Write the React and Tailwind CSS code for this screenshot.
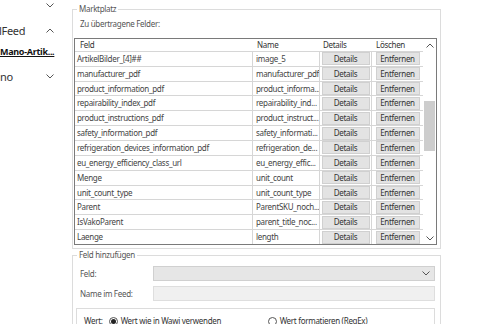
import React from "react";

const rows = [
  ["ArtikelBilder_[4]##", "image_5"],
  ["manufacturer_pdf", "manufacturer_pdf"],
  ["product_information_pdf", "product_informa..."],
  ["repairability_index_pdf", "repairability_ind..."],
  ["product_instructions_pdf", "product_instruct..."],
  ["safety_information_pdf", "safety_informati..."],
  ["refrigeration_devices_information_pdf", "refrigeration_de..."],
  ["eu_energy_efficiency_class_url", "eu_energy_effic..."],
  ["Menge", "unit_count"],
  ["unit_count_type", "unit_count_type"],
  ["Parent", "ParentSKU_noch..."],
  ["IsVakoParent", "parent_title_noc..."],
  ["Laenge", "length"],
];

function Chevron({ up }) {
  return (
    <svg width="8" height="5" viewBox="0 0 8 5" className="text-[#555]">
      <path d={up ? "M0.5 4.5 L4 1 L7.5 4.5" : "M0.5 0.5 L4 4 L7.5 0.5"} fill="none" stroke="currentColor" strokeWidth="1" />
    </svg>
  );
}

function SideNav() {
  return (
    <div className="w-[60px] shrink-0 text-[11px] text-[#333]">
      <div className="flex items-center justify-end pr-[6px] h-[10px]">
        <Chevron />
      </div>
      <div className="flex items-center justify-between pr-[6px] mt-[15px] h-[10px]">
        <span className="-ml-[1px]">lFeed</span>
        <Chevron up />
      </div>
      <div className="mt-[11px] h-[10px] flex items-center">
        <span className="font-bold underline text-[9px] text-[#111] whitespace-nowrap">Mano-Artik...</span>
      </div>
      <div className="flex items-center justify-between pr-[6px] mt-[15px] h-[10px]">
        <span>no</span>
        <Chevron />
      </div>
    </div>
  );
}

function Btn({ children, w }) {
  return (
    <div className={`${w} h-[13px] bg-[#e3e3e3] border border-[#d0d0d0] flex items-center justify-center text-[#333]`}>
      {children}
    </div>
  );
}

function FieldTable() {
  return (
    <div className="mt-[10px] -ml-[6px] w-[363px] h-[207px] border border-[#7a7a7a] bg-white flex overflow-hidden">
      <div className="flex-1 flex flex-col">
        <div className="flex h-[12px] items-center text-[#333]">
          <div className="w-[178px] pl-[5px]">Feld</div>
          <div className="w-[67px] pl-[4px]">Name</div>
          <div className="w-[52px] pl-[3px]">Details</div>
          <div className="flex-1 pl-[4px]">Löschen</div>
        </div>
        {rows.map(([f, n], i) => (
          <div key={i} className="flex h-[15px] items-center border-t border-[#d6d6d6] text-[#444]">
            <div className="w-[178px] h-full pl-[2px] flex items-center border-r border-[#d6d6d6] whitespace-nowrap overflow-hidden">{f}</div>
            <div className="w-[67px] h-full pl-[3px] flex items-center border-r border-[#d6d6d6] whitespace-nowrap overflow-hidden">{n}</div>
            <div className="w-[52px] h-full flex items-center justify-center border-r border-[#d6d6d6]">
              <Btn w="w-[48px]">Details</Btn>
            </div>
            <div className="flex-1 h-full flex items-center justify-center">
              <Btn w="w-[44px]">Entfernen</Btn>
            </div>
          </div>
        ))}
      </div>
      <div className="w-[13px] flex flex-col items-center bg-white">
        <div className="h-[12px] flex items-center"><Chevron up /></div>
        <div className="w-full flex-1 relative">
          <div className="absolute left-[1px] right-[1px] top-[50px] h-[50px] bg-[#cdcdcd]" />
        </div>
        <div className="h-[12px] flex items-center"><Chevron /></div>
      </div>
    </div>
  );
}

function Radio({ checked }) {
  return (
    <span className="w-[9px] h-[9px] shrink-0 rounded-full border border-[#555] bg-white flex items-center justify-center">
      {checked && <span className="w-[5px] h-[5px] rounded-full bg-[#222]" />}
    </span>
  );
}

export default function App() {
  return (
    <div className="w-[497px] h-[324px] bg-white overflow-hidden flex font-['Noto_Sans',sans-serif] text-[8px] tracking-[-0.3px] leading-none">
      <SideNav />
      <div className="flex-1 pl-[12px] pt-[9px]">
        <div className="relative w-[369px] h-[240px] border border-[#dcdcdc] pl-[7px] pt-[10px]">
          <span className="absolute -top-[5px] left-[4px] px-[2px] bg-white text-[#555]">Marktplatz</span>
          <div className="text-[#555]">Zu übertragene Felder:</div>
          <FieldTable />
        </div>
        <div className="relative mt-[6px] w-[369px] h-[80px] border border-[#dcdcdc] pl-[7px] pt-[10px]">
          <span className="absolute -top-[5px] left-[4px] px-[2px] bg-white text-[#555]">Feld hinzufügen</span>
          <div className="flex items-center h-[15px]">
            <div className="w-[73px] text-[#555]">Feld:</div>
            <div className="w-[282px] h-full bg-[#e6e6e6] border border-[#d0d0d0] flex items-center justify-end pr-[4px]">
              <Chevron />
            </div>
          </div>
          <div className="flex items-center h-[15px] mt-[5px]">
            <div className="w-[73px] text-[#555]">Name im Feed:</div>
            <div className="w-[282px] h-full bg-[#f0f0f0] border border-[#dedede]" />
          </div>
          <div className="mt-[7px] -ml-[4px] w-[359px] h-[30px] border border-[#dcdcdc] pl-[7px] pt-[8px] flex items-start text-[#333]">
            <span className="mr-[6px]">Wert:</span>
            <Radio checked />
            <span className="ml-[3px] w-[147px]">Wert wie in Wawi verwenden</span>
            <Radio />
            <span className="ml-[3px]">Wert formatieren (RegEx)</span>
          </div>
        </div>
      </div>
    </div>
  );
}
